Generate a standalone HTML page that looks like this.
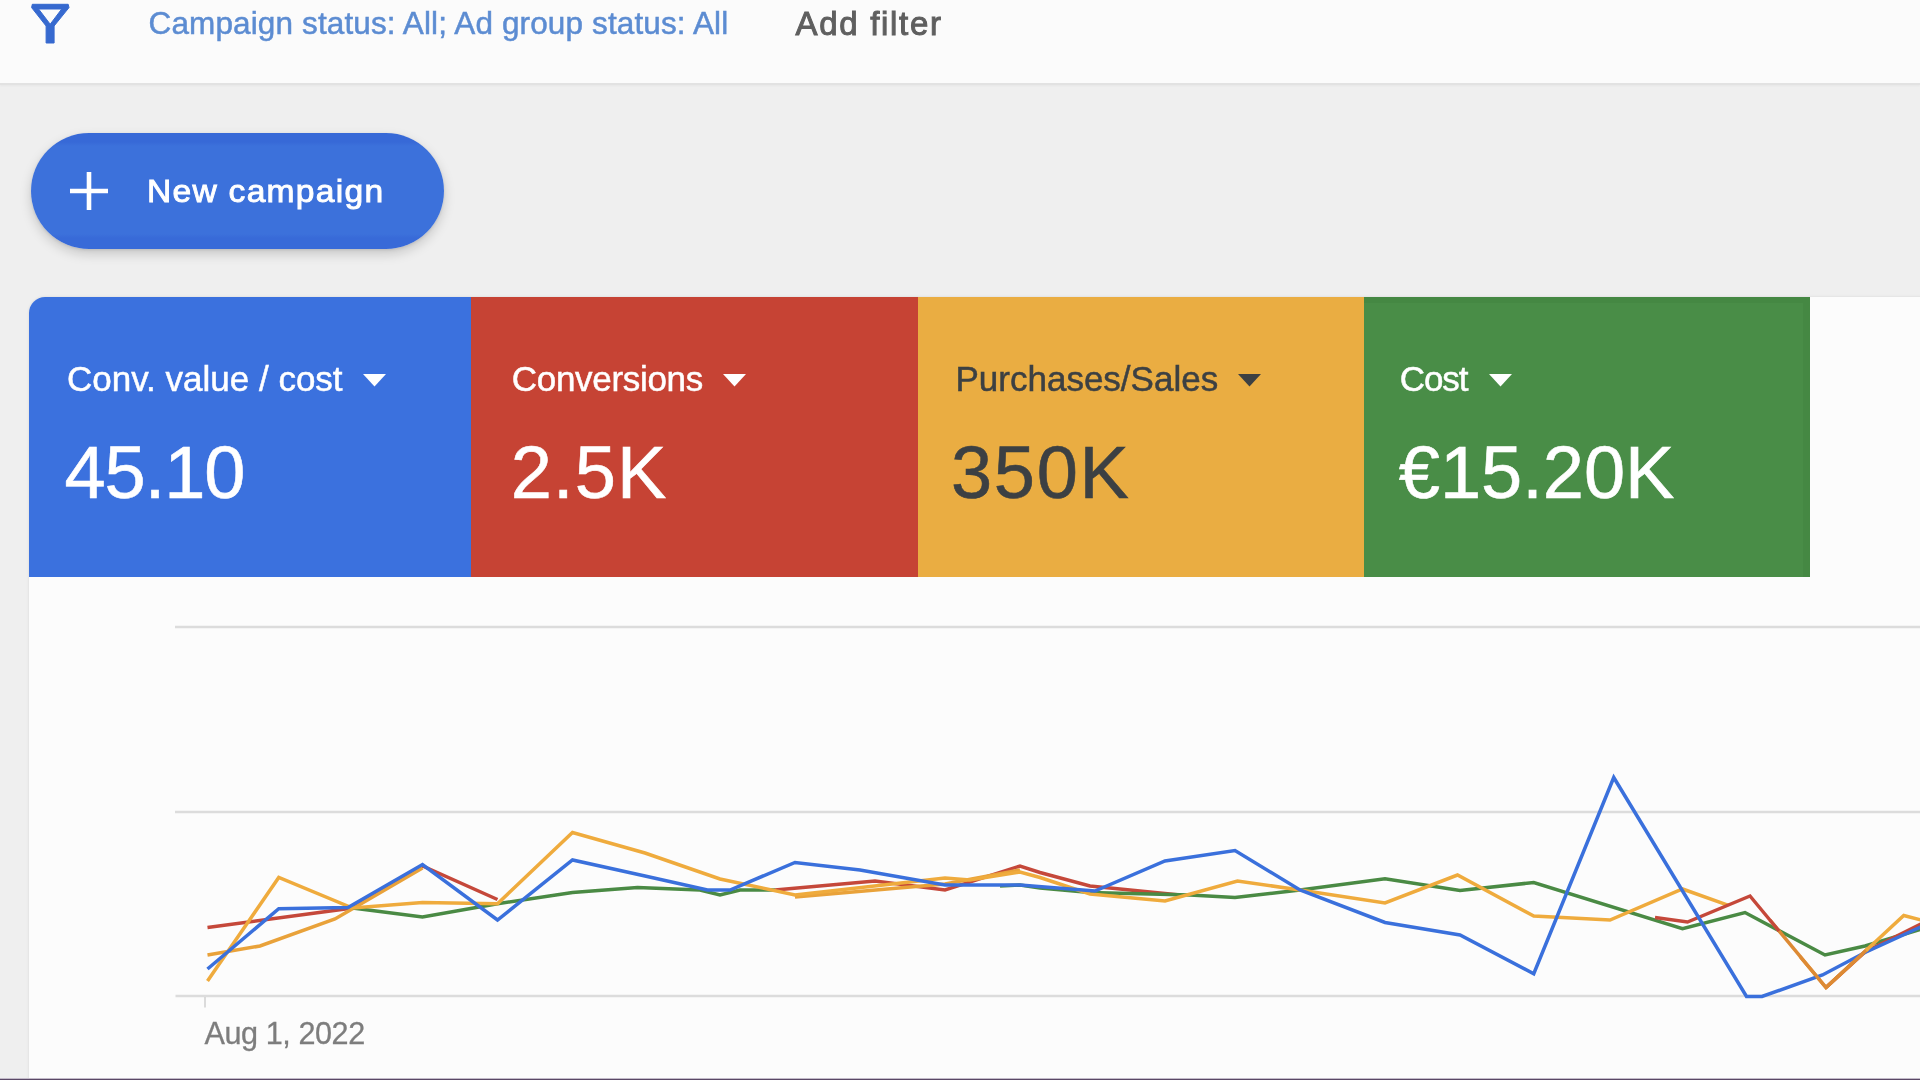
<!DOCTYPE html>
<html lang="en">
<head>
<meta charset="utf-8">
<title>Campaigns overview</title>
<style>
*{box-sizing:border-box;margin:0;padding:0}
html,body{width:1920px;height:1080px;overflow:hidden}
body{background:#efefef;font-family:"Liberation Sans",Arial,sans-serif;position:relative;-webkit-font-smoothing:antialiased}
.abs{position:absolute;white-space:nowrap;line-height:1}
#topbar{position:absolute;left:0;top:0;width:1920px;height:85px;background:#fbfbfb;border-bottom:2px solid #e2e2e2;box-shadow:0 1px 2px rgba(0,0,0,.04)}
#funnel{position:absolute;left:0;top:0}
#filtertxt{left:148.5px;top:8px;font-size:31.5px;color:#5c8cd2;letter-spacing:.13px;-webkit-text-stroke:.5px #5c8cd2}
#addfilter{left:795.5px;top:6.5px;font-size:33px;color:#5f5f5f;letter-spacing:1.7px;-webkit-text-stroke:1px #5f5f5f}
#btn{position:absolute;left:31px;top:133px;width:412.5px;height:115.5px;border-radius:58px;background:linear-gradient(#3769d7 0,#3769d7 9px,#3c71db 13px,#3c71db 101px,#386ad8 105px,#386ad8 100%);box-shadow:0 5px 12px rgba(0,0,0,.17),0 1px 3px rgba(0,0,0,.10)}
#btn .plus{position:absolute;left:39px;top:39px}
#btntxt{left:116px;top:42px;font-size:32px;color:#fff;letter-spacing:1.2px;-webkit-text-stroke:.9px #fff;transform:scaleX(1.05);transform-origin:0 0}
#card{position:absolute;left:29px;top:297px;width:1900px;height:800px;background:#fcfcfc;border-radius:16px 0 0 0;box-shadow:0 0 3px rgba(0,0,0,.10)}
.tile{position:absolute;top:0;height:280px}
.tile .lbl{left:38px;top:64px;font-size:35px;-webkit-text-stroke:.5px currentColor}
.tile .val{left:36px;top:138.5px;font-size:74px;-webkit-text-stroke:.6px currentColor}
.tile svg.dd{position:absolute;top:77px}
#t1{left:0;width:442.25px;background:#3b71de;border-radius:16px 0 0 0;color:#fff}
#t2{left:442.25px;width:446.25px;background:#c64334;color:#fff}
#t3{left:888.5px;width:446.25px;background:#eaad42;color:#3c4043}
#t4{left:1334.75px;width:446.5px;background:#498d47;box-shadow:inset -7px 6px 0 rgba(0,40,0,.045);color:#fff}
#t1 .val{letter-spacing:-1.05px;left:35.5px}
#t2 .lbl{left:40.5px;letter-spacing:-.3px}
#t2 .val{left:39.5px;letter-spacing:1.1px}
#t3 .val{left:33.5px;letter-spacing:1.7px}
#t4 .lbl{left:36px;letter-spacing:-1.1px}
#t4 .val{left:35px}
#chart{position:absolute;left:0;top:577px;overflow:visible}
.abs,svg{filter:blur(.55px)}
#bottomline{position:absolute;left:0;top:1078px;width:1920px;height:2px;background:linear-gradient(#e4e0e8 0,#a79db0 45%,#5a4866 75%)}
</style>
</head>
<body>
<div id="topbar">
  <svg id="funnel" width="100" height="50" viewBox="0 0 100 50"><path fill-rule="evenodd" fill="#3669cf" stroke="#3669cf" stroke-width="1" stroke-linejoin="round" d="M32.3 4.3H68.2L69 7.6L54.1 26V43H46.1V26L31.6 7.6ZM38.6 9H61.7L50.2 24.2Z"/></svg>
  <div class="abs" id="filtertxt">Campaign status: All; Ad group status: All</div>
  <div class="abs" id="addfilter">Add filter</div>
</div>
<div id="btn">
  <svg class="plus" width="38" height="38" viewBox="0 0 38 38"><path d="M19 0V38M0 19H38" stroke="#fff" stroke-width="4.6"/></svg>
  <div class="abs" id="btntxt">New campaign</div>
</div>
<div id="card">
  <div class="tile" id="t1"><div class="abs lbl">Conv. value / cost</div><svg class="dd" style="left:334px" width="23" height="12.5" viewBox="0 0 24 12" preserveAspectRatio="none"><path d="M0 0H24L12 12Z" fill="#fff"/></svg><div class="abs val">45.10</div></div>
  <div class="tile" id="t2"><div class="abs lbl">Conversions</div><svg class="dd" style="left:251.5px" width="23" height="12.5" viewBox="0 0 24 12" preserveAspectRatio="none"><path d="M0 0H24L12 12Z" fill="#fff"/></svg><div class="abs val">2.5K</div></div>
  <div class="tile" id="t3"><div class="abs lbl">Purchases/Sales</div><svg class="dd" style="left:320.5px" width="23" height="12.5" viewBox="0 0 24 12" preserveAspectRatio="none"><path d="M0 0H24L12 12Z" fill="#3c4043"/></svg><div class="abs val">350K</div></div>
  <div class="tile" id="t4"><div class="abs lbl">Cost</div><svg class="dd" style="left:125.5px" width="23" height="12.5" viewBox="0 0 24 12" preserveAspectRatio="none"><path d="M0 0H24L12 12Z" fill="#fff"/></svg><div class="abs val">€15.20K</div></div>
</div>
<svg id="chart" width="1920" height="503" viewBox="0 577 1920 503">
  <g stroke="#dcdcdc" stroke-width="2.5">
    <path d="M175 627H1930M175 812H1930M175.5 996H1930"/>
  </g>
  <g fill="none" stroke-width="3.5" stroke-linejoin="miter" stroke-linecap="butt">
    <polyline stroke="#c5483a" points="207.5,927.5 352.5,908 422.5,866 497.5,899.5"/>
    <polyline stroke="#c5483a" points="775,890 875,881 945,890 1020,866 1040,872.5 1090,886 1180,895"/>
    <polyline stroke="#e9a23a" points="207.5,955 260,946 335,919 352.5,908.75 422.5,868"/>
    <polyline stroke="#e9a23a" points="795,897 945,884 1020,870"/>
    <polyline stroke="#4a8a44" points="352.5,908 422.5,917 497.5,903.75 572.5,892.5 637.5,887.5 700,890 720,895 740,890 775,890"/>
    <polyline stroke="#4a8a44" points="1000,886 1020,885 1040,888 1090,892.5 1190,895 1235,897.5 1300,890 1385,878.75 1460,890.5 1533.75,882.5 1682.5,928.75 1745,912.5 1825,955 1865,946 1925,928"/>
    <polyline stroke="#c5483a" points="1826,987.5 1865,952 1925,922"/>
    <polyline stroke="#efab3d" points="207.5,981 278.75,877.5 352.5,908 422.5,902.5 497.5,903.75 572.5,832.5 645,853 720,879 795,895 945,878 970,880 1020,872 1040,877.5 1090,894 1165,901 1237.5,881 1300,890 1385,903 1457.5,875 1533.75,916 1610,920 1682.5,889 1728.5,905.3"/>
    <polyline stroke="#dd8a34" points="1770,920 1826,987.5 1872,945"/>
    <polyline stroke="#c5483a" points="1655,917.5 1687.5,922 1750,896 1779,931"/>
    <polyline stroke="#3a70dc" points="207.5,969 278.75,908.75 348,907.5 422.5,864.5 497.5,920 572.5,860 645,876 707.5,890 730,890 795,862.5 860,870 945,885 1020,885 1095,891 1165,861 1235,850.5 1300,890 1385,922.5 1460,935 1533.75,973.75 1613.75,777.5 1746.5,996.5 1762,996.5 1822.5,975 1865,952.5 1925,925"/>
    <polyline stroke="#dd8a34" points="1800,956.5 1826,987.5 1868,948.6"/>
    <polyline stroke="#efab3d" points="1866,950.5 1903.75,915.5 1925,921"/>
  </g>
  <path d="M205 997V1007.5" stroke="#cdcdcd" stroke-width="1.4"/>
  <text x="204.4" y="1044.4" font-size="30.6" letter-spacing="-.42" fill="#7d7d7d" stroke="#7d7d7d" stroke-width=".3" font-family="Liberation Sans, Arial, sans-serif">Aug 1, 2022</text>
</svg>
<div id="bottomline"></div>
</body>
</html>
